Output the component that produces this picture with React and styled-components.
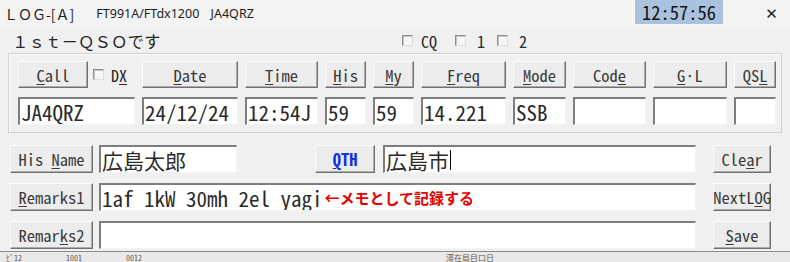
import React from 'react'
import styled, { createGlobalStyle } from 'styled-components'

const gothic = `"Noto Sans Mono CJK JP", "Noto Sans CJK JP", "DejaVu Sans Mono", monospace`

const GlobalStyle = createGlobalStyle`
  html, body {
    margin: 0;
    padding: 0;
    background: #e6e6e6;
  }
  * {
    box-sizing: border-box;
  }
`

const Window = styled.div`
  width: 790px;
  height: 262px;
  overflow: hidden;
  background: #f0f0f0;
  display: flex;
  flex-direction: column;
  font-family: ${gothic};
  color: #222;
`

const TitleBar = styled.div`
  height: 28px;
  display: flex;
  align-items: flex-start;
  padding-left: 4px;
  background: #f3f3f3;
`

const AppTitle = styled.span`
  font-family: "Noto Sans CJK JP", sans-serif;
  font-size: 14px;
  line-height: 28px;
  color: #1c1c1c;
`

const RigInfo = styled.span`
  font-family: "Noto Sans", "Liberation Sans", sans-serif;
  font-size: 12.5px;
  line-height: 28px;
  margin-left: 22px;
  color: #1c1c1c;
  word-spacing: 8px;
`

const Clock = styled.div`
  margin-left: auto;
  width: 88px;
  height: 24px;
  background: #a9c3de;
  display: flex;
  align-items: center;
  justify-content: center;
  font-size: 18.5px;
  line-height: 1;
  color: #141414;
`

const CloseButton = styled.div`
  width: 67px;
  height: 28px;
  display: flex;
  align-items: center;
  justify-content: center;
  padding-left: 30px;
  font-family: "DejaVu Sans", sans-serif;
  font-size: 15px;
  color: #222;
`

const StatusRow = styled.div`
  height: 25px;
  display: flex;
  align-items: center;
  padding-left: 12px;
`

const StatusText = styled.span`
  font-size: 16.5px;
  width: 390px;
  color: #262626;
`

const CheckLabel = styled.label`
  display: flex;
  align-items: center;
  font-size: 16px;
  color: #2a2a2a;
  margin-right: ${p => p.$gap || 0}px;
  margin-left: ${p => p.$lead || 0}px;
`

const Box = styled.span`
  width: 11px;
  height: 11px;
  margin-right: ${p => p.$space || 8}px;
  background: #f6f6f6;
  border-top: 1px solid #8e8e8e;
  border-left: 1px solid #8e8e8e;
  border-right: 1px solid #dcdcdc;
  border-bottom: 1px solid #dcdcdc;
  box-shadow: inset 1px 1px #c4c4c4;
`

const GroupBox = styled.div`
  margin-left: 8px;
  width: 774px;
  border: 1px solid #cfcfcf;
  box-shadow: inset 1px 1px #fff;
  padding: 7px 4px 7px 9px;
  display: grid;
  grid-template-columns: 117px 96px 73px 41px 41px 85px 53px 73px 74px 42px;
  grid-template-rows: 27px 28px;
  column-gap: 7px;
  row-gap: 9px;
`

const Button = styled.div`
  height: ${p => p.$h || 27}px;
  width: ${p => (p.$w ? `${p.$w}px` : 'auto')};
  display: flex;
  align-items: center;
  justify-content: center;
  background: #ececec;
  border-top: 1px solid #fbfbfb;
  border-left: 1px solid #fbfbfb;
  border-right: 1px solid #707070;
  border-bottom: 1px solid #707070;
  box-shadow: inset -1px -1px #ababab;
  font-size: 16.5px;
  color: ${p => (p.$blue ? '#1530e0' : '#3a3a3a')};
  font-weight: ${p => (p.$blue ? 700 : 400)};
  white-space: pre;
`

const Key = styled.span`
  text-decoration: underline;
  text-underline-offset: 2px;
  text-decoration-thickness: 1px;
`

const CallCell = styled.div`
  display: flex;
  align-items: center;
`

const Field = styled.div`
  height: ${p => p.$h || 28}px;
  width: ${p => (p.$w ? `${p.$w}px` : 'auto')};
  flex: ${p => (p.$w ? 'none' : 1)};
  background: #fff;
  border-top: 2px solid #7d7d7d;
  border-left: 2px solid #7d7d7d;
  border-right: 1px solid #f4f4f4;
  border-bottom: 1px solid #f4f4f4;
  padding-left: 1px;
  display: flex;
  align-items: center;
  font-size: 21px;
  color: #2a2a2a;
  white-space: pre;
  overflow: hidden;
`

const Caret = styled.span`
  width: 1px;
  height: 20px;
  background: #000;
  margin-left: 1px;
`

const Note = styled.span`
  font-family: "Noto Sans CJK JP", sans-serif;
  font-size: 15px;
  font-weight: 700;
  color: #e60000;
  margin-left: 2px;
`

const Rows = styled.div`
  margin-top: 12px;
  padding-left: 10px;
  display: grid;
  grid-template-columns: 83px 597px 69px;
  grid-auto-rows: 28px;
  column-gap: 6px;
  row-gap: 10px;
  & > :nth-child(3n) {
    margin-left: 11px;
  }
`

const Line = styled.div`
  display: flex;
  align-items: stretch;
`

const Spread = styled.div`
  width: ${p => p.$w}px;
`

const Backdrop = styled.div`
  margin-top: 2px;
  flex: 1;
  border-top: 1px solid #8a8a8a;
  background: #e9e9e9;
  display: flex;
  align-items: flex-start;
  gap: 44px;
  padding: 1px 0 0 6px;
  font-size: 8px;
  line-height: 9px;
  color: #5a5a5a;
`

const Scrap = styled.span`
  margin-left: ${p => p.$lead || 0}px;
`

export default function App() {
  return (
    <Window>
      <GlobalStyle />
      <TitleBar>
        <AppTitle>ＬＯＧ-[Ａ]</AppTitle>
        <RigInfo>FT991A/FTdx1200 JA4QRZ</RigInfo>
        <Clock>12:57:56</Clock>
        <CloseButton>✕</CloseButton>
      </TitleBar>

      <StatusRow>
        <StatusText>１ｓｔ－ＱＳＯです</StatusText>
        <CheckLabel $gap={18}><Box />CQ</CheckLabel>
        <CheckLabel $gap={12}><Box $space={11} />1</CheckLabel>
        <CheckLabel><Box $space={11} />2</CheckLabel>
      </StatusRow>

      <GroupBox>
        <CallCell>
          <Button $w={70}><span><Key>C</Key>all</span></Button>
          <CheckLabel $lead={5}><Box $space={7} /><span>D<Key>X</Key></span></CheckLabel>
        </CallCell>
        <Button><span><Key>D</Key>ate</span></Button>
        <Button><span><Key>T</Key>ime</span></Button>
        <Button><span><Key>H</Key>is</span></Button>
        <Button><span><Key>M</Key>y</span></Button>
        <Button><span><Key>F</Key>req</span></Button>
        <Button><span><Key>M</Key>ode</span></Button>
        <Button><span>Cod<Key>e</Key></span></Button>
        <Button><span><Key>G</Key>·L</span></Button>
        <Button><span>QS<Key>L</Key></span></Button>

        <Field>JA4QRZ</Field>
        <Field>24/12/24</Field>
        <Field>12:54J</Field>
        <Field>59</Field>
        <Field>59</Field>
        <Field>14.221</Field>
        <Field>SSB</Field>
        <Field />
        <Field />
        <Field />
      </GroupBox>

      <Rows>
        <Button $h={28}><span>His <Key>N</Key>ame</span></Button>
        <Line>
          <Field $w={138}>広島太郎</Field>
          <Spread $w={78} />
          <Button $w={60} $h={28} $blue><span><Key>Q</Key>TH</span></Button>
          <Spread $w={8} />
          <Field>広島市<Caret /></Field>
        </Line>
        <Button $h={28}><span>Cle<Key>a</Key>r</span></Button>

        <Button $h={28}><span><Key>R</Key>emarks1</span></Button>
        <Field>1af 1kW 30mh 2el yagi<Note>←メモとして記録する</Note></Field>
        <Button $h={28}><span>NextL<Key>O</Key>G</span></Button>

        <Button $h={28}><span>Remar<Key>k</Key>s2</span></Button>
        <Field />
        <Button $h={28}><span><Key>S</Key>ave</span></Button>
      </Rows>

      <Backdrop>
        <Scrap>ﾋﾞ12</Scrap>
        <Scrap>1001</Scrap>
        <Scrap>0012</Scrap>
        <Scrap $lead={260}>滞在局目口日</Scrap>
      </Backdrop>
    </Window>
  )
}
